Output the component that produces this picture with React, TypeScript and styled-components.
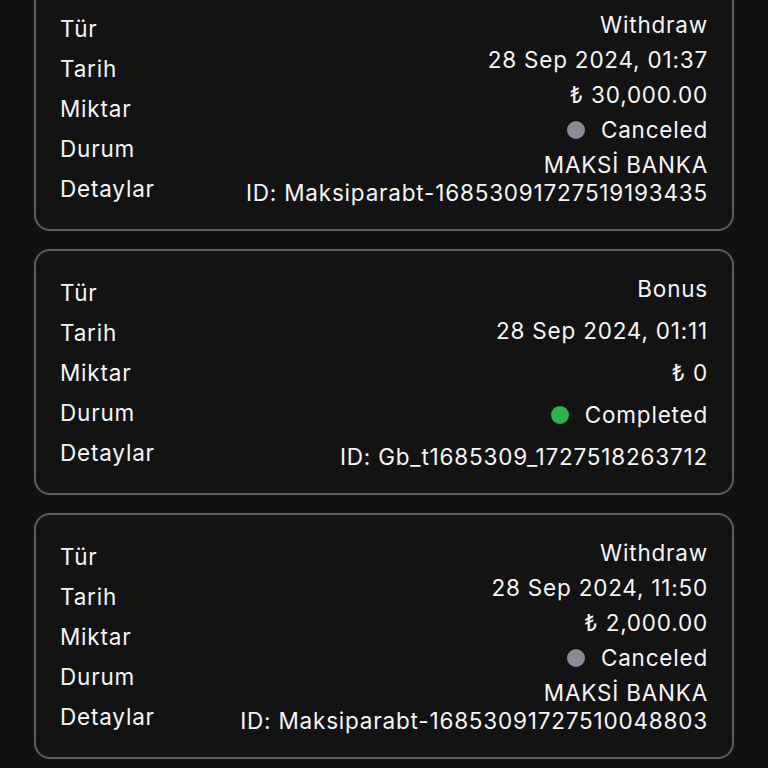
import React from "react";
import styled, {createGlobalStyle} from "styled-components";

type Status = "canceled" | "completed";

type Tx = {
  type: string;
  date: string;
  amount: string;
  status: Status;
  bank?: string;
  id: string;
};

const GlobalStyle = createGlobalStyle`
  html, body {
    margin: 0;
    padding: 0;
    background: #111111;
    color: #f6f6f6;
    font-family: Inter, "Noto Sans", "DejaVu Sans", sans-serif;
    overflow: hidden;
  }
`;

const List = styled.div`
  display: flex;
  flex-direction: column;
  gap: 18px;
  padding: 0 34px;
  margin-top: -15px;
`;

const Card = styled.section`
  display: grid;
  grid-template-columns: auto 1fr;
  padding: 29px 24px;
  border: 2px solid #5c5c5c;
  border-radius: 16px;
  background: #131313;
`;

const Labels = styled.div`
  display: flex;
  flex-direction: column;
  gap: 16px;
`;

const Label = styled.span`
  font-size: 22.5px;
  line-height: 24px;
  font-weight: 400;
  letter-spacing: 0.8px;
  padding-top: 1px;
  margin-bottom: -1px;
`;

const Values = styled.div`
  display: flex;
  flex-direction: column;
  justify-content: space-between;
  align-items: flex-end;
  margin: -5px 0 -7px;
`;

const Value = styled.div`
  font-size: 22.5px;
  line-height: 28px;
  font-weight: 400;
  letter-spacing: 0.8px;
  display: flex;
  align-items: center;
  gap: 16px;
  white-space: nowrap;
`;

const Details = styled(Value)`
  flex-direction: column;
  align-items: flex-end;
  gap: 0;
`;

const Dot = styled.span<{$status: Status}>`
  width: 18px;
  height: 18px;
  border-radius: 50%;
  background: ${(p) => (p.$status === "completed" ? "#2fb34c" : "#8b8b95")};
`;

const txs: Tx[] = [
  {
    type: "Withdraw",
    date: "28 Sep 2024, 01:37",
    amount: "₺ 30,000.00",
    status: "canceled",
    bank: "MAKSİ BANKA",
    id: "ID: Maksiparabt-16853091727519193435",
  },
  {
    type: "Bonus",
    date: "28 Sep 2024, 01:11",
    amount: "₺ 0",
    status: "completed",
    id: "ID: Gb_t1685309_1727518263712",
  },
  {
    type: "Withdraw",
    date: "28 Sep 2024, 11:50",
    amount: "₺ 2,000.00",
    status: "canceled",
    bank: "MAKSİ BANKA",
    id: "ID: Maksiparabt-16853091727510048803",
  },
];

const labels = ["Tür", "Tarih", "Miktar", "Durum", "Detaylar"];

const App: React.FC = () => {
  return (
    <>
      <GlobalStyle />
      <List>
        {txs.map((tx, i) => (
          <Card key={i}>
            <Labels>
              {labels.map((l) => (
                <Label key={l}>{l}</Label>
              ))}
            </Labels>
            <Values>
              <Value>{tx.type}</Value>
              <Value>{tx.date}</Value>
              <Value>{tx.amount}</Value>
              <Value>
                <Dot $status={tx.status} />
                {tx.status === "completed" ? "Completed" : "Canceled"}
              </Value>
              <Details>
                {tx.bank && <span>{tx.bank}</span>}
                <span>{tx.id}</span>
              </Details>
            </Values>
          </Card>
        ))}
      </List>
    </>
  );
};

export default App;
